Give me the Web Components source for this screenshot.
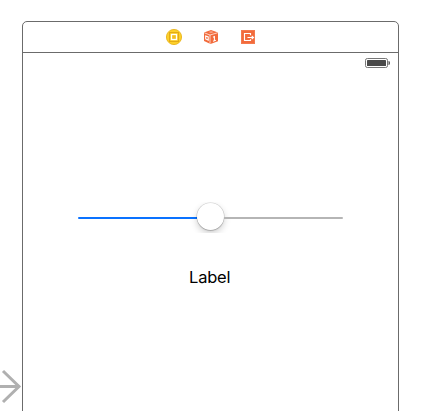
<!DOCTYPE html>
<html lang="en">
<head>
<meta charset="utf-8">
<title>Storyboard scene</title>
<style>
html,body{margin:0;width:423px;height:411px;overflow:hidden;background:#fff;font-family:Inter,"Liberation Sans",sans-serif}
</style>
</head>
<body>
<storyboard-canvas>
  <entry-arrow slot="entry"></entry-arrow>
  <scene-frame>
    <scene-icon slot="dock" kind="controller"></scene-icon>
    <scene-icon slot="dock" kind="responder"></scene-icon>
    <scene-icon slot="dock" kind="exit"></scene-icon>
    <status-bar></status-bar>
    <ui-slider></ui-slider>
    <ui-label>Label</ui-label>
  </scene-frame>
</storyboard-canvas>
<script>
function define(name, html) {
  customElements.define(name, class extends HTMLElement {
    constructor() {
      super();
      this.attachShadow({mode: 'open'}).innerHTML = html;
    }
  });
}
define('storyboard-canvas', `
<style>
:host{display:grid;grid-template-columns:22px 377px;width:423px;height:411px;box-sizing:border-box;padding-top:21px;overflow:hidden}
.entry{padding-top:348px}
</style>
<div class="entry"><slot name="entry"></slot></div><slot></slot>`);
define('entry-arrow', `
<style>:host{display:block}svg{display:block}</style>
<svg width="22" height="36" viewBox="0 0 22 36" fill="none" stroke="#b0b0b0" stroke-width="3"><path d="M0 17.5H19M3 2L19 17.5L3 33"/></svg>`);
define('scene-frame', `
<style>
:host{display:flex;flex-direction:column;box-sizing:border-box;height:440px;border:1px solid #6b6b6b;border-radius:5px 5px 0 0;background:#fff}
header{height:30px;border-bottom:1px solid #6b6b6b;display:flex;justify-content:center;gap:19px;align-items:center;padding-left:1px}
main{display:flex;flex-direction:column}
</style>
<header><slot name="dock"></slot></header><main><slot></slot></main>`);
const glyphs = {
  controller: `<circle cx="9" cy="9" r="7.6" fill="#fdd02a" stroke="#e9b41c" stroke-width=".9"/>
    <rect x="4.5" y="4.5" width="9" height="9" fill="#fbcb25" stroke="#e3ab14"/>
    <rect x="6.5" y="6.5" width="5" height="5" fill="#f3bf20" stroke="#fff" stroke-width="1.3"/>`,
  responder: `<path d="M2 4.6L9 2L16 4.4V13.2L8.5 16L2 13Z" fill="#f26b3c"/>
    <path d="M2.3 4.8L8 7L15.8 4.7M8 7V15.7" fill="none" stroke="#fff" stroke-width=".7"/>
    <path d="M6.5 4L9.2 3.2L12 4L9 5Z" fill="#f9ab90"/>
    <path d="M11 9.3L12.4 8.6V12.8M11 13.2L13.9 12.3" fill="none" stroke="#fff" stroke-width="1.1"/>
    <path d="M3.7 8L6.2 8.9V12.1L3.7 11Z" fill="none" stroke="#fff" stroke-width="1.1"/>`,
  exit: `<rect x="2" y="2" width="14" height="14" fill="#f26b3c"/>
    <rect x="2.5" y="2.5" width="13" height="13" fill="none" stroke="#f47a4f"/>
    <path d="M11.5 7.2V5.5H5.5V12.5H11.5V11.2M8.5 9.5H14.5M12.7 7.8L14.5 9.5L12.7 11.2" fill="none" stroke="#fff" stroke-width="1.15"/>`
};
customElements.define('scene-icon', class extends HTMLElement {
  connectedCallback() {
    if (this.shadowRoot) return;
    this.attachShadow({mode: 'open'}).innerHTML = `
<style>:host{display:block;width:18px;height:18px}svg{display:block}</style>
<svg width="18" height="18" viewBox="0 0 18 18">${glyphs[this.getAttribute('kind')]}</svg>`;
  }
});
define('status-bar', `
<style>:host{display:flex;justify-content:flex-end;height:20px;box-sizing:border-box;padding:5px 8px 0 0}svg{display:block}</style>
<svg width="25" height="10" viewBox="0 0 25 10"><rect x=".5" y=".5" width="22" height="9" rx="1.8" fill="#fff" stroke="#777"/><rect x="2" y="2" width="19" height="6" rx=".6" fill="#4a4a4a"/><path d="M23.5 3H24Q25 3.3 25 5T24 7H23.5Z" fill="#555"/></svg>`);
define('ui-slider', `
<style>
:host{display:grid;grid-template-columns:1fr 27px 1fr;align-items:center;width:265px;height:31px;margin:129px 0 0 55px;overflow:hidden}
.track{height:2px;margin-top:1px;background:#b5b5b5;border-radius:0 1px 1px 0}
.min{background:#0a72ff;border-radius:1px 0 0 1px}
.thumb{width:27px;height:27px;margin-top:-2px;border-radius:50%;background:#fff;box-shadow:0 0 0 .5px rgba(0,0,0,.16),0 1px 1px rgba(0,0,0,.16),0 3px 7px rgba(0,0,0,.2)}
</style>
<div class="track min"></div><div class="thumb"></div><div class="track"></div>`);
define('ui-label', `
<style>:host{display:block;width:42px;margin:34px 0 0 166px;font-size:16.5px;line-height:21px;letter-spacing:-.2px;color:#000;white-space:nowrap}</style>
<slot></slot>`);
</script>
</body>
</html>
